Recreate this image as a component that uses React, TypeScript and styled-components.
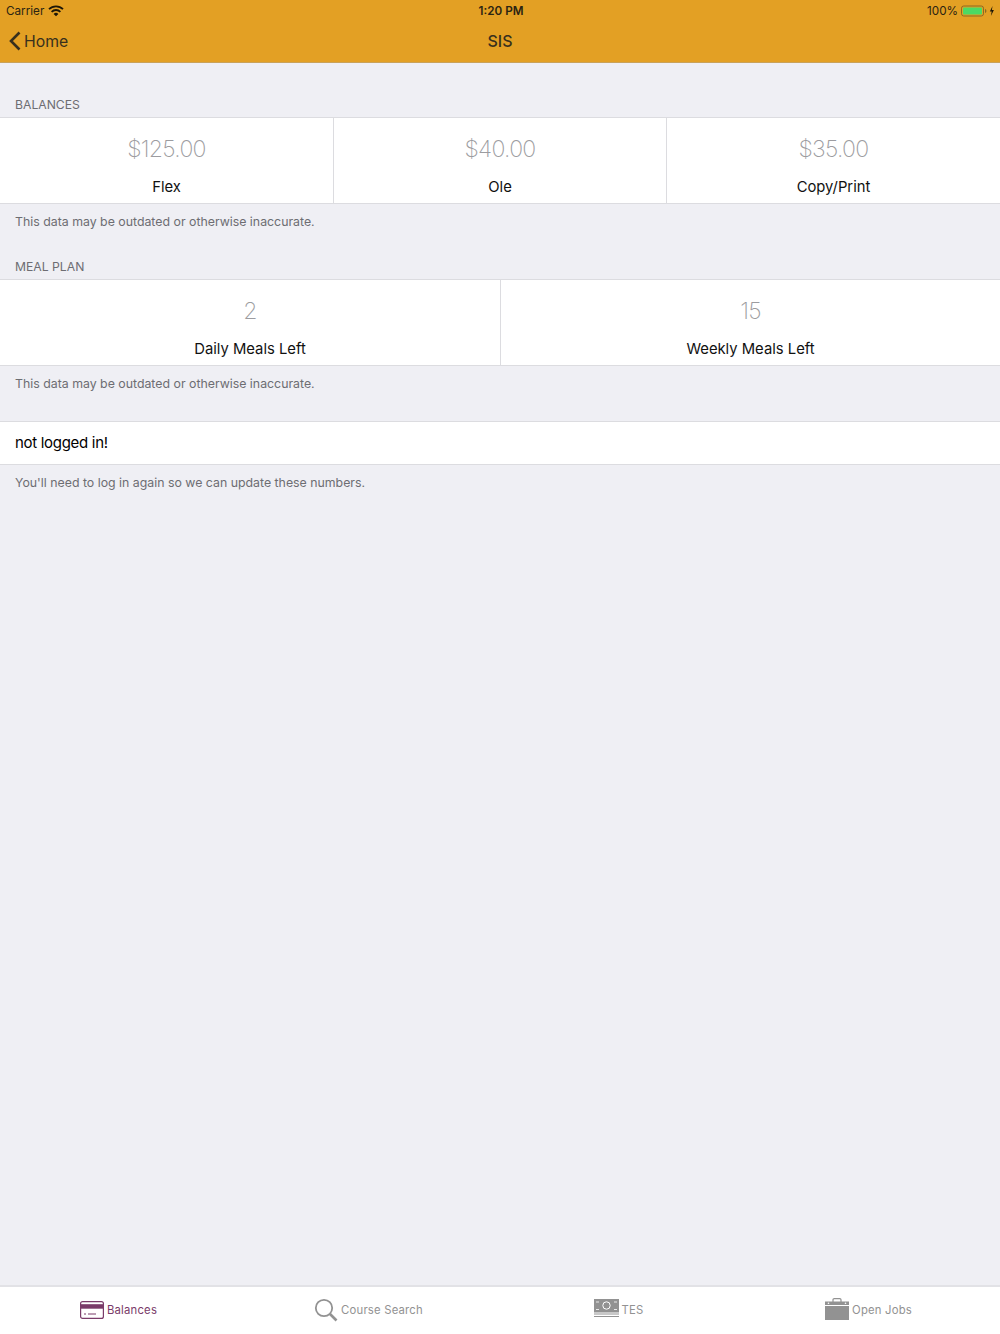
import React from "react";
import styled, { createGlobalStyle } from "styled-components";

const Global = createGlobalStyle`
  html, body { margin: 0; padding: 0; height: 100%; background: #efeff4; }
  #root { height: 100%; }
  * { box-sizing: border-box; }
`;

const Page = styled.div`
  width: 1000px;
  height: 1334px;
  display: flex;
  flex-direction: column;
  font-family: Inter, "Liberation Sans", sans-serif;
  background: #efeff4;
  overflow: hidden;
`;

const Header = styled.header`
  flex: none;
  height: 63px;
  background: #e3a024;
  border-bottom: 1px solid #c9a25a;
  display: flex;
  flex-direction: column;
`;

const StatusBar = styled.div`
  height: 20px;
  padding: 1px 5px 0 6px;
  display: grid;
  grid-template-columns: 1fr auto 1fr;
  align-items: center;
  font-size: 11.7px;
  color: #2b2412;
`;

const StatusLeft = styled.div`
  display: flex;
  align-items: center;
  gap: 4px;
`;

const StatusRight = styled.div`
  display: flex;
  align-items: center;
  justify-content: flex-end;
  gap: 3px;
`;

const Clock = styled.div`
  font-weight: 600;
  padding-left: 1px;
`;

const NavBar = styled.div`
  flex: 1;
  display: grid;
  grid-template-columns: 1fr auto 1fr;
  align-items: center;
  color: #38301d;
`;

const BackLink = styled.div`
  display: flex;
  align-items: center;
  gap: 3px;
  padding-left: 9px;
  font-size: 15.8px;
`;

const Title = styled.div`
  font-size: 16px;
  font-weight: 500;
`;

const Content = styled.main`
  flex: 1;
  display: flex;
  flex-direction: column;
`;

const SectionLabel = styled.div<{ $top: number }>`
  margin-top: ${(p) => p.$top}px;
  padding: 0 15px 3px;
  height: 22px;
  line-height: 19px;
  font-size: 12.2px;
  color: #6d6d72;
`;

const Cards = styled.div<{ $template: string }>`
  display: grid;
  grid-template-columns: ${(p) => p.$template};
  height: 87px;
  background: #fff;
  border-top: 1px solid #dcdce0;
  border-bottom: 1px solid #dcdce0;
`;

const Card = styled.div`
  display: flex;
  flex-direction: column;
  align-items: center;
  padding-top: 17px;
  border-left: 1px solid #dcdce0;
  &:first-child { border-left: none; }
`;

const Value = styled.div`
  height: 28px;
  line-height: 28px;
  font-size: 23px;
  font-weight: 200;
  letter-spacing: -0.7px;
  color: #9c9ca0;
`;

const CardLabel = styled.div`
  margin-top: 14px;
  line-height: 20px;
  font-size: 14.8px;
  color: #111;
`;

const Note = styled.div`
  padding: 9px 15px 0;
  height: 34px;
  line-height: 18px;
  font-size: 12.33px;
  color: #6d6d72;
`;

const MessageRow = styled.div`
  margin-top: 21px;
  height: 44px;
  padding: 0 15px 1px;
  display: flex;
  align-items: center;
  background: #fff;
  border-top: 1px solid #dcdce0;
  border-bottom: 1px solid #dcdce0;
  font-size: 15px;
  letter-spacing: -0.3px;
  color: #000;
`;

const TabBar = styled.nav`
  flex: none;
  height: 49px;
  background: #fff;
  border-top: 2px solid #e2e2e6;
  display: grid;
  grid-template-columns: repeat(4, 1fr);
`;

const Tab = styled.div<{ $active?: boolean }>`
  display: flex;
  align-items: center;
  justify-content: center;
  gap: 3px;
  padding: 0 13px 2px 0;
  font-size: 11.3px;
  letter-spacing: 0.2px;
  color: ${(p) => (p.$active ? "#7a3b69" : "#929292")};
`;

const Wifi = () => (
  <svg width="16" height="12" viewBox="0 0 16 12">
    <path d="M1 4.2a10 10 0 0 1 14 0" fill="none" stroke="#1d1708" strokeWidth="1.8" />
    <path d="M3.6 6.8a6.3 6.3 0 0 1 8.8 0" fill="none" stroke="#1d1708" strokeWidth="1.8" />
    <path d="M5.6 8.9 8 11.3l2.4-2.4a3.4 3.4 0 0 0-4.8 0z" fill="#1d1708" />
  </svg>
);

const Battery = () => (
  <svg width="34" height="12" viewBox="0 0 34 12">
    <rect x="0.5" y="1" width="22" height="10" rx="2.2" fill="none" stroke="#8b6a25" strokeWidth="1" />
    <rect x="2" y="2.5" width="19" height="7" rx="0.8" fill="#4cd964" />
    <path d="M24 4v4c.9-.3 1.400-1 1.400-2s-.5-1.700-1.400-2z" fill="#8b6a25" />
    <path d="M31.500 1 28.800 6.500h1.900L29.900 11l3-6h-2z" fill="#1d1708" />
  </svg>
);

const Chevron = () => (
  <svg width="12" height="20" viewBox="0 0 12 20">
    <path d="M10.500 1.500 2 10l8.500 8.500" fill="none" stroke="#38301d" strokeWidth="2.600" />
  </svg>
);

const CardIcon = () => (
  <svg width="24" height="18" viewBox="0 0 24 18">
    <rect x="0.600" y="0.600" width="22.800" height="16.800" rx="2" fill="none" stroke="#7a3b69" strokeWidth="1.200" />
    <rect x="1" y="3.200" width="22" height="4.500" fill="#7a3b69" />
    <path d="M4 13h2M8 13h8" stroke="#7a3b69" strokeWidth="1" />
  </svg>
);

const SearchIcon = () => (
  <svg width="24" height="24" viewBox="0 0 24 24">
    <circle cx="10" cy="10" r="8.200" fill="none" stroke="#929292" strokeWidth="1.800" />
    <path d="m16 16 6.500 6.500" stroke="#929292" strokeWidth="2.600" />
  </svg>
);

const MoneyIcon = () => (
  <svg width="25" height="21" viewBox="0 0 25 21">
    <rect x="0" y="0" width="25" height="13.500" fill="#929292" />
    <circle cx="12.500" cy="6.500" r="3.700" fill="none" stroke="#fff" strokeWidth="1" />
    <path d="M2 3h3M20 3h3M2 10.500h3M20 10.500h3" stroke="#fff" strokeWidth="0.800" />
    <path d="M0 15h25M0 17.500h25" stroke="#929292" strokeWidth="1.200" />
  </svg>
);

const BriefcaseIcon = () => (
  <svg width="24" height="24" viewBox="0 0 24 24">
    <path d="M8 4V1.800C8 1 8.500.700 9.200.700h5.600c.7 0 1.200.300 1.200 1.100V4" fill="none" stroke="#929292" strokeWidth="1.200" />
    <path d="M0 3.500h24V7H0zM0 8h24v14H0z" fill="#929292" />
    <circle cx="3.500" cy="5.200" r="0.800" fill="#fff" />
    <circle cx="20.500" cy="5.200" r="0.800" fill="#fff" />
  </svg>
);

const balances = [
  { value: "$125.00", label: "Flex" },
  { value: "$40.00", label: "Ole" },
  { value: "$35.00", label: "Copy/Print" },
];

const meals = [
  { value: "2", label: "Daily Meals Left" },
  { value: "15", label: "Weekly Meals Left" },
];

const outdated = "This data may be outdated or otherwise inaccurate.";

export default function App() {
  return (
    <Page>
      <Global />
      <Header>
        <StatusBar>
          <StatusLeft>
            Carrier <Wifi />
          </StatusLeft>
          <Clock>1:20 PM</Clock>
          <StatusRight>
            100% <Battery />
          </StatusRight>
        </StatusBar>
        <NavBar>
          <BackLink>
            <Chevron />
            Home
          </BackLink>
          <Title>SIS</Title>
        </NavBar>
      </Header>
      <Content>
        <SectionLabel $top={32}>BALANCES</SectionLabel>
        <Cards $template="333px 333px 1fr">
          {balances.map((b) => (
            <Card key={b.label}>
              <Value>{b.value}</Value>
              <CardLabel>{b.label}</CardLabel>
            </Card>
          ))}
        </Cards>
        <Note>{outdated}</Note>
        <SectionLabel $top={19}>MEAL PLAN</SectionLabel>
        <Cards $template="1fr 1fr">
          {meals.map((m) => (
            <Card key={m.label}>
              <Value>{m.value}</Value>
              <CardLabel>{m.label}</CardLabel>
            </Card>
          ))}
        </Cards>
        <Note>{outdated}</Note>
        <MessageRow>not logged in!</MessageRow>
        <Note>You'll need to log in again so we can update these numbers.</Note>
      </Content>
      <TabBar>
        <Tab $active>
          <CardIcon />
          Balances
        </Tab>
        <Tab>
          <SearchIcon />
          Course Search
        </Tab>
        <Tab>
          <MoneyIcon />
          TES
        </Tab>
        <Tab>
          <BriefcaseIcon />
          Open Jobs
        </Tab>
      </TabBar>
    </Page>
  );
}
